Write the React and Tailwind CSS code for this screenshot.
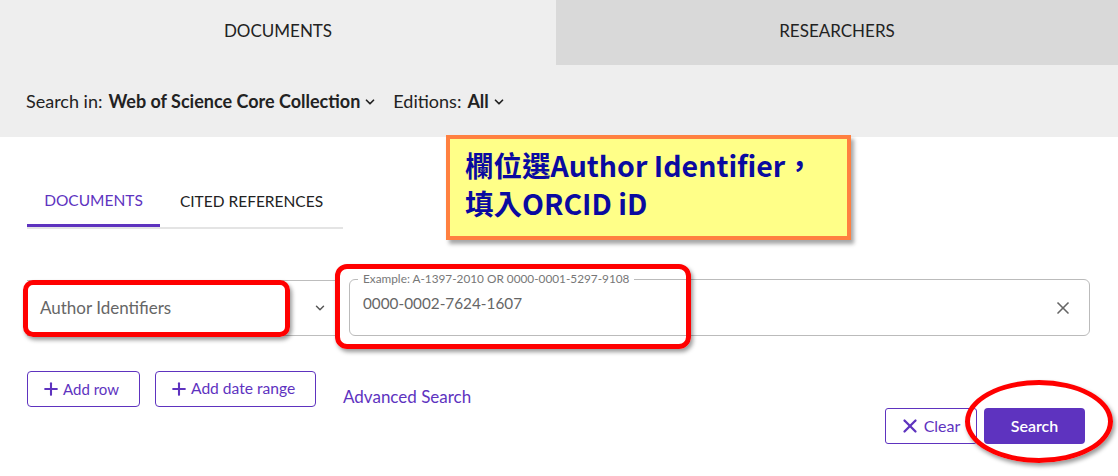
import { X, Plus, ChevronDown } from "lucide-react";

const font = { fontFamily: '"Source Sans Pro", Lato, "Noto Sans", sans-serif' };

export default function App() {
  return (
    <div className="relative w-[1118px] h-[476px] overflow-hidden bg-white" style={font}>
      {/* Top tabs */}
      <div className="flex h-[65px]">
        <div className="w-[556px] bg-[#eeeeee] flex items-center justify-center pb-[4px] text-[17px] text-[#222]">
          DOCUMENTS
        </div>
        <div className="flex-1 bg-[#d9d9d9] flex items-center justify-center pb-[4px] text-[17px] text-[#222]">
          RESEARCHERS
        </div>
      </div>

      {/* Search in bar */}
      <div className="h-[72px] bg-[#eeeeee] flex items-center pl-[26px] text-[18px] text-[#222]">
        <span>Search in:</span>
        <span className="ml-[6px] font-bold">Web of Science Core Collection</span>
        <ChevronDown className="w-[14px] h-[14px] ml-[3px] mt-[1px]" strokeWidth={3} />
        <span className="ml-[16px]">Editions:</span>
        <span className="ml-[6px] font-bold">All</span>
        <ChevronDown className="w-[14px] h-[14px] ml-[3px] mt-[1px]" strokeWidth={3} />
      </div>

      {/* Sub tabs */}
      <div className="mt-[40px] ml-[27px] w-[316px] flex border-b-2 border-[#e4e4e4] text-[15.5px]">
        <div className="w-[133px] h-[50px] flex items-center justify-center text-[#5e33bf] border-b-[3px] border-[#5e33bf] -mb-[2px]">
          DOCUMENTS
        </div>
        <div className="flex-1 h-[50px] flex items-center justify-center text-[#222]">
          CITED REFERENCES
        </div>
      </div>

      {/* Field row */}
      <div className="mt-[50px] ml-[27px] flex items-start gap-[14px]">
        <div className="w-[308px] h-[56px] mt-[1px] border-y border-[#bdbdbd] flex items-center justify-between pl-[13px] pr-[8px] text-[17px] text-[#666]">
          <span>Author Identifiers</span>
          <ChevronDown className="w-[14px] h-[14px] text-[#555]" strokeWidth={2.5} />
        </div>
        <div className="relative w-[741px] h-[57px] border border-[#bbbbbb] rounded-[6px] flex items-center justify-between pl-[13px] pr-[16px]">
          <span className="absolute -top-[8px] left-[8px] bg-white px-[5px] text-[11.8px] leading-[14px] text-[#777]">
            Example: A-1397-2010 OR 0000-0001-5297-9108
          </span>
          <span className="text-[15.3px] text-[#666] -mt-[8px]">0000-0002-7624-1607</span>
          <X className="w-[20px] h-[20px] text-[#666]" strokeWidth={2} />
        </div>
      </div>

      {/* Add buttons */}
      <div className="mt-[35px] ml-[27px] flex items-start">
        <button className="w-[113px] h-[36px] border border-[#5e33bf] rounded-[4px] flex items-center pl-[13px] text-[15px] text-[#5e33bf]">
          <Plus className="w-[20px] h-[20px] mr-[2px]" strokeWidth={2.5} />
          Add row
        </button>
        <button className="ml-[15px] w-[161px] h-[36px] border border-[#5e33bf] rounded-[4px] flex items-center pl-[13px] text-[15.6px] text-[#5e33bf]">
          <Plus className="w-[20px] h-[20px] mr-[2px]" strokeWidth={2.5} />
          Add date range
        </button>
        <span className="ml-[27px] mt-[13px] text-[17px] text-[#5e33bf]">Advanced Search</span>
      </div>

      {/* Clear / Search */}
      <div className="absolute left-[885px] top-[408px] flex gap-[7px]">
        <button className="w-[92px] h-[36px] border border-[#5e33bf] rounded-[3px] flex items-center justify-center pr-[3px] text-[16px] text-[#5e33bf]">
          <X className="w-[22px] h-[22px] mr-[3px]" strokeWidth={2.5} />
          Clear
        </button>
        <button className="w-[101px] h-[36px] bg-[#5e33bf] rounded-[4px] flex items-center justify-center text-[16px] font-semibold text-white">
          Search
        </button>
      </div>

      {/* Annotations */}
      <div className="absolute left-[446px] top-[135px] w-[405px] h-[105px] bg-[#ffff88] border-[4px] border-[#ff8040] shadow-[3px_4px_4px_rgba(0,0,0,0.35)] pl-[15px] pt-[7px] text-[28.5px] font-bold text-[#0a0aa0] flex flex-col gap-[0px]" style={{ fontFamily: '"Noto Sans CJK TC", "Noto Sans", sans-serif' }}>
        <div className="leading-[37px] h-[38px]">欄位選Author Identifier，</div>
        <div className="leading-[37px] h-[38px]">填入ORCID iD</div>
      </div>
      <div className="absolute left-[23px] top-[280px] w-[267px] h-[57px] border-[5px] border-[#ff0000] rounded-[10px] shadow-[2px_3px_4px_rgba(0,0,0,0.4)]" />
      <div className="absolute left-[335px] top-[264px] w-[356px] h-[85px] border-[5px] border-[#ff0000] rounded-[12px] shadow-[2px_3px_4px_rgba(0,0,0,0.4)]" />
      <div className="absolute left-[965px] top-[380px] w-[148px] h-[83px] border-[5px] border-[#ff0000] rounded-[50%] shadow-[2px_3px_4px_rgba(0,0,0,0.4)]" />
    </div>
  );
}
